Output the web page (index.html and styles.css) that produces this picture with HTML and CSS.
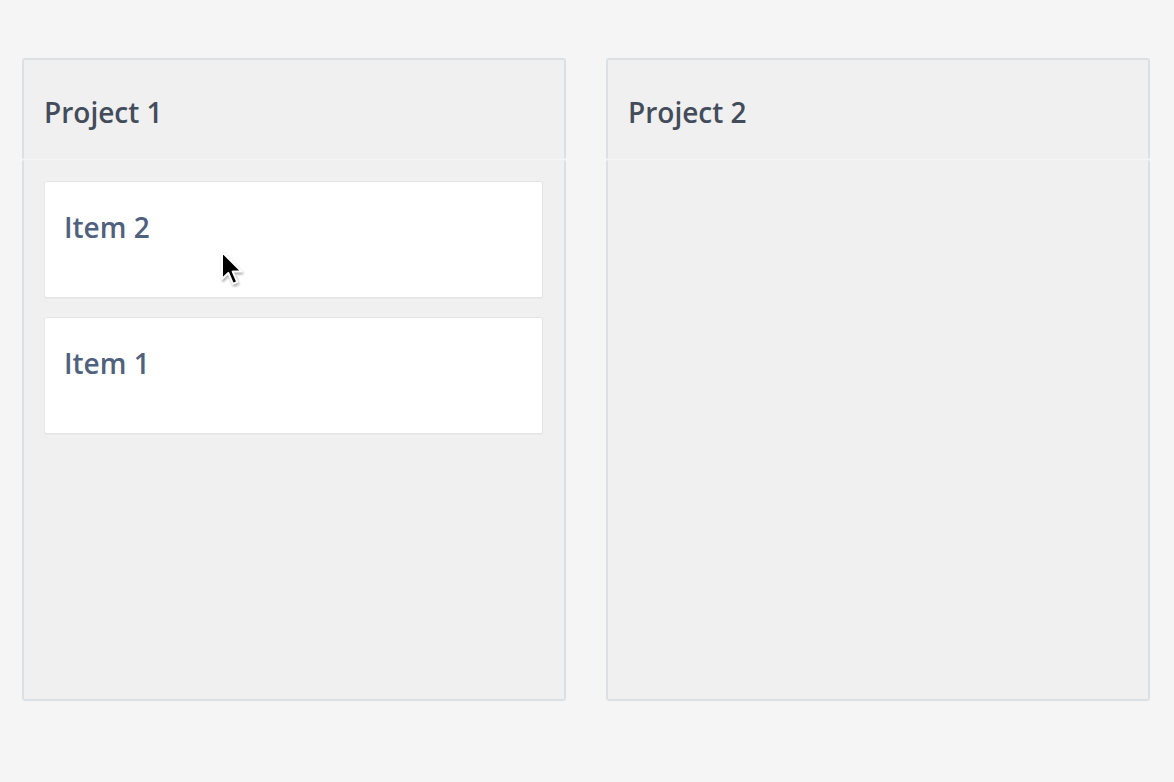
FILE: index.html
```html
<!DOCTYPE html>
<html>
<head>
  <meta charset="utf-8">
  <title>Projects board</title>
  <link rel="stylesheet" href="styles.css">
</head>
<body>
  <div class="board">
    <section class="column">
      <header class="column-head"><h2>Project 1</h2></header>
      <div class="column-body">
        <div class="card"><h3>Item 2</h3></div>
        <div class="card"><h3>Item 1</h3></div>
      </div>
    </section>
    <section class="column">
      <header class="column-head"><h2>Project 2</h2></header>
      <div class="column-body"></div>
    </section>
  </div>

  <svg class="cursor" width="26" height="40" viewBox="0 0 26 40">
    <path d="M2 2 L2 29 L8.3 23 L13 33.8 L17.3 32 L12.7 21.6 L21.5 21.6 Z" fill="#000" stroke="#fff" stroke-width="2" stroke-linejoin="round"/>
  </svg>
</body>
</html>
```

FILE: styles.css
```css
html, body { margin:0; padding:0; }
body
{
  background:#f5f5f5;
  font-family:"Open Sans", "Noto Sans", sans-serif;
  min-height:782px;
  position:relative;
}

.board
{
  display:flex;
  gap:40px;
  padding:58px 0 0 22px;
}

.column
{
  width:544px;
  display:flex;
  flex-direction:column;
}

.column-head
{
  background:#f0f0f0;
  border:2px solid #dde0e3;
  border-bottom:none;
  border-radius:3px 3px 2px 2px;
  padding:33px 20px 28px;
  height:38px;
}
.column-head h2
{
  margin:0;
  font-size:28px;
  line-height:38px;
  font-weight:600;
  color:#434c5a;
}

.column-body
{
  box-sizing:border-box;
  background:#f0f0f0;
  border:2px solid #dde0e3;
  border-top:none;
  border-radius:2px 2px 3px 3px;
  margin-top:1px;
  height:541px;
  padding:21px 21px 0 20px;
  display:flex;
  flex-direction:column;
  gap:19px;
}

.card
{
  background:#fff;
  border:1px solid #e4e5e7;
  border-radius:2px;
  box-shadow:0 1px 0 #e8e9ea;
  padding:26px 19px 51px;
}
.card h3
{
  margin:0;
  font-size:28px;
  line-height:38px;
  font-weight:600;
  color:#50617d;
}

.cursor
{
  position:absolute;
  left:220px;
  top:250px;
  filter:drop-shadow(1px 2px 1px rgba(0,0,0,0.3));
}
```
